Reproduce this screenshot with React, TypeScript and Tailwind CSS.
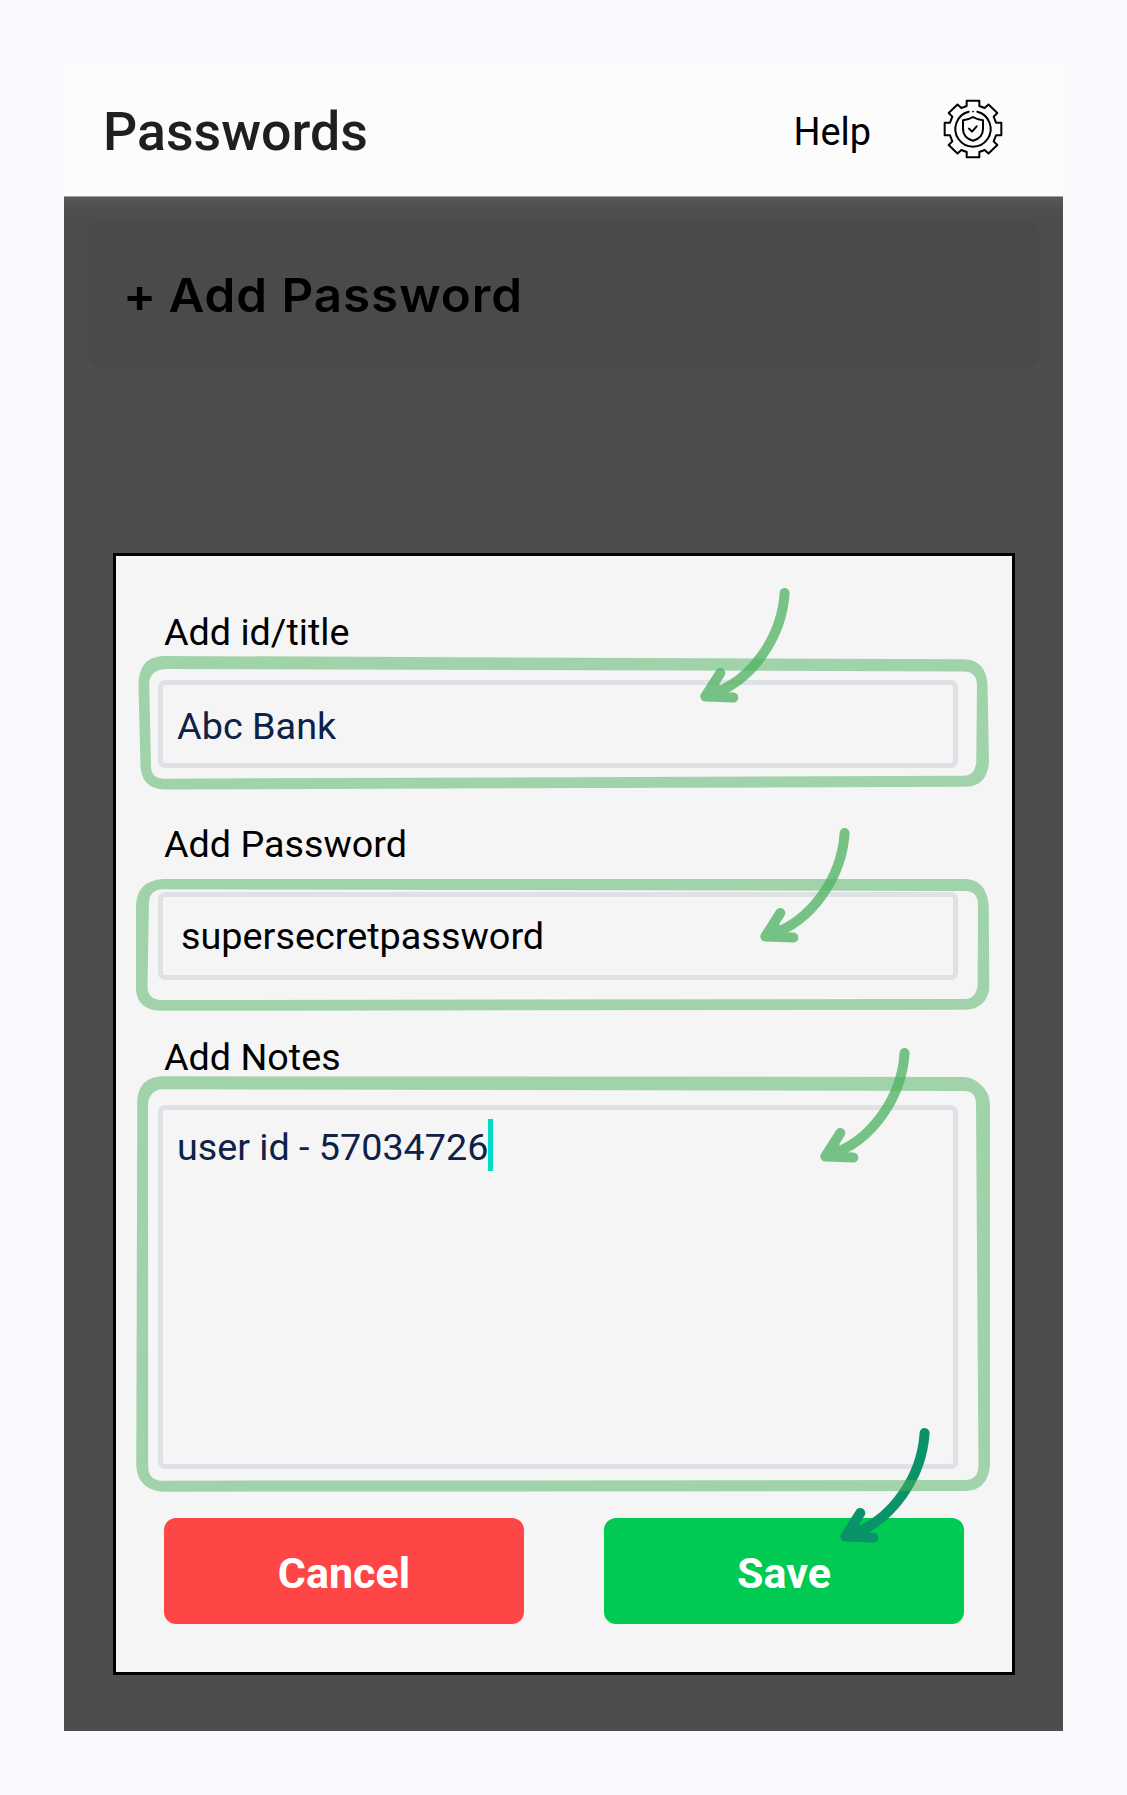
import React from 'react';

const octant = [
  [19, 85], [19, 69], [35, 63], [46.5, 73.5], [73, 48], [62, 37], [69, 19], [85, 19],
];
const gearPoints = [
  ...octant.map(([x, y]) => [x, -y]),
  ...[...octant].reverse().map(([x, y]) => [x, y]),
  ...octant.map(([x, y]) => [-x, y]),
  ...[...octant].reverse().map(([x, y]) => [-x, -y]),
]
  .map((p) => p.join(','))
  .join(' ');

function GearIcon() {
  return (
    <svg
      className="h-[60px] w-[60px]"
      viewBox="-90 -90 180 180"
      fill="none"
      stroke="#000"
      strokeWidth="6"
      strokeLinecap="round"
      strokeLinejoin="round"
    >
      <polygon points={gearPoints} />
      <path d="M-13 -51.5A53 53 0 1 0 13 -51.5" />
      <circle cx="0" cy="-52" r="1.2" strokeWidth="3" />
      <path d="M0 -36Q-14 -27 -30 -26.500V0C-30 17 -18 30 0 35C18 30 30 17 30 0V-26.500Q14 -27 0 -36Z" />
      <path d="M-12 -1L-3 8L11 -8" />
    </svg>
  );
}

function Arrow({ x, y, color = '#4cb260', opacity = 0.75 }: { x: number; y: number; color?: string; opacity?: number }) {
  return (
    <g
      transform={`translate(${x} ${y})`}
      opacity={opacity}
      fill="none"
      stroke={color}
      strokeWidth="10"
      strokeLinecap="round"
      strokeLinejoin="round"
    >
      <path d="M79.300 -103.500C76.500 -60 47 -15 5 -2" />
      <path d="M15 -23.500L0 0L28 1" />
      <path d="M3 0L12 -12L16 0Z" fill={color} strokeWidth="4" />
    </g>
  );
}

const highlights = [
  'M163 656L964 659.300Q986 660 987.500 685L989 762Q987 786.500 966 786.700L163 789.500Q142 788 140.500 767L138.500 685Q138.500 657 163 656Z M165 669L964 671.500Q976.500 671.500 977 685L976.300 762Q975 775.500 964 775.700L163 778.700Q151.500 778 151 767L149.200 682Q151 670 165 669Z',
  'M163 879L965 879Q986 879.500 988.700 905L989.300 989Q986 1009 965 1009.700L160 1010.800Q138 1010 136 990V905Q137 881 163 879Z M163 889.300L965 891Q977 891 978 903L977.700 985Q976 999 965 999L160 1000Q148 999 147.500 987L149 903Q149 890 163 889.300Z',
  'M163 1076.300L964 1077Q972 1077 980 1084Q990 1092 990 1106V1466Q987 1491 965 1491L163 1491.700Q138 1490 136.300 1466L137.300 1100Q139 1077 163 1076.300Z M163 1089.300L964 1091Q976 1091 976 1104L978.500 1466Q978 1480 965 1480L160 1480.700Q148.500 1479 148.200 1467L148 1103Q150 1090 163 1089.300Z',
];

function Annotations() {
  return (
    <svg className="pointer-events-none absolute left-0 top-0" width="1127" height="1795" viewBox="0 0 1127 1795">
      <Arrow x={845.3} y={1536.500} color="#0a9369" opacity={1} />
      {highlights.map((d) => (
        <path key={d} d={d} fill="#4cb260" fillOpacity="0.5" fillRule="evenodd" />
      ))}
      <Arrow x={705.3} y={696.500} />
      <Arrow x={765.3} y={936.500} />
      <Arrow x={825.3} y={1156.500} />
    </svg>
  );
}

function Label({ children }: { children: React.ReactNode }) {
  return <div className="ml-[6.5px] h-[44px] text-[37.7px] leading-[44px] text-black">{children}</div>;
}

export default function App() {
  return (
    <div className="relative flex h-[1795px] w-[1127px] flex-col bg-[#f9fafd] px-[64px] pt-[64px] font-['Roboto',sans-serif]">
      <header className="flex h-[132px] w-[999px] items-center bg-[#fcfcfc] pl-[39px] pr-[60px] pb-[3px]">
        <h1 className="mt-[6px] text-[53.7px] font-medium leading-[64px] text-[#1f1f1f]">Passwords</h1>
        <span className="ml-auto mr-[72px] mt-[6px] text-[37.9px] leading-[44px] text-black">Help</span>
        <GearIcon />
      </header>
      <main className="flex h-[1535px] w-[999px] flex-col border-t border-[#a2a6a2] bg-[#4d4d4d] bg-[linear-gradient(#595959,#4d4d4d_14px)] px-[24px] pt-[24px]">
        <div className="flex h-[147px] w-[951px] items-center rounded-[12px] bg-[#4a4a4a] pl-[35px]">
          <span className="origin-left scale-x-[1.05] whitespace-nowrap pt-[1px] font-['Inter'] text-[47px] font-semibold leading-[56px] tracking-[0.9px] text-black">
            <span className="-mr-[2px]">+</span> Add Password
          </span>
        </div>
        <section className="ml-[25px] mt-[185px] flex h-[1122px] w-[902px] flex-col border-[3px] border-black bg-[#f5f5f5] pl-[41.5px] pt-[54px]">
          <Label>Add id/title</Label>
          <div className="mt-[26px] flex h-[88px] w-[800px] items-center rounded-[7px] border-[5px] border-[#e0e1e7] pl-[14.5px] pt-[3px] text-[37.8px] leading-[44px] text-[#0e2146]">
            Abc Bank
          </div>
          <div className="h-[54px]" />
          <Label>Add Password</Label>
          <div className="mt-[26px] flex h-[88px] w-[800px] items-center rounded-[7px] border-[5px] border-[#e0e1e7] pl-[18.5px] text-[37.8px] leading-[44px] text-black">
            supersecretpassword
          </div>
          <div className="h-[55px]" />
          <Label>Add Notes</Label>
          <div className="mt-[26px] flex h-[364px] w-[800px] items-start rounded-[7px] border-[5px] border-[#e0e1e7] pl-[14.5px] pt-[9px] text-[37.7px] leading-[54px] text-[#0e2146]">
            <span className="pt-[1px]">user id - 57034726</span>
            <span className="h-[52px] w-[5px] bg-[#00dcc6]" />
          </div>
          <div className="ml-[6.500px] mt-[49px] flex gap-[80px] text-[43px] font-bold leading-[50px] text-white">
            <button className="h-[106px] w-[360px] rounded-[12px] bg-[#ff4646] pt-[3px]">Cancel</button>
            <button className="h-[106px] w-[360px] rounded-[12px] bg-[#00ca51] pt-[3px]">Save</button>
          </div>
        </section>
      </main>
      <Annotations />
    </div>
  );
}
